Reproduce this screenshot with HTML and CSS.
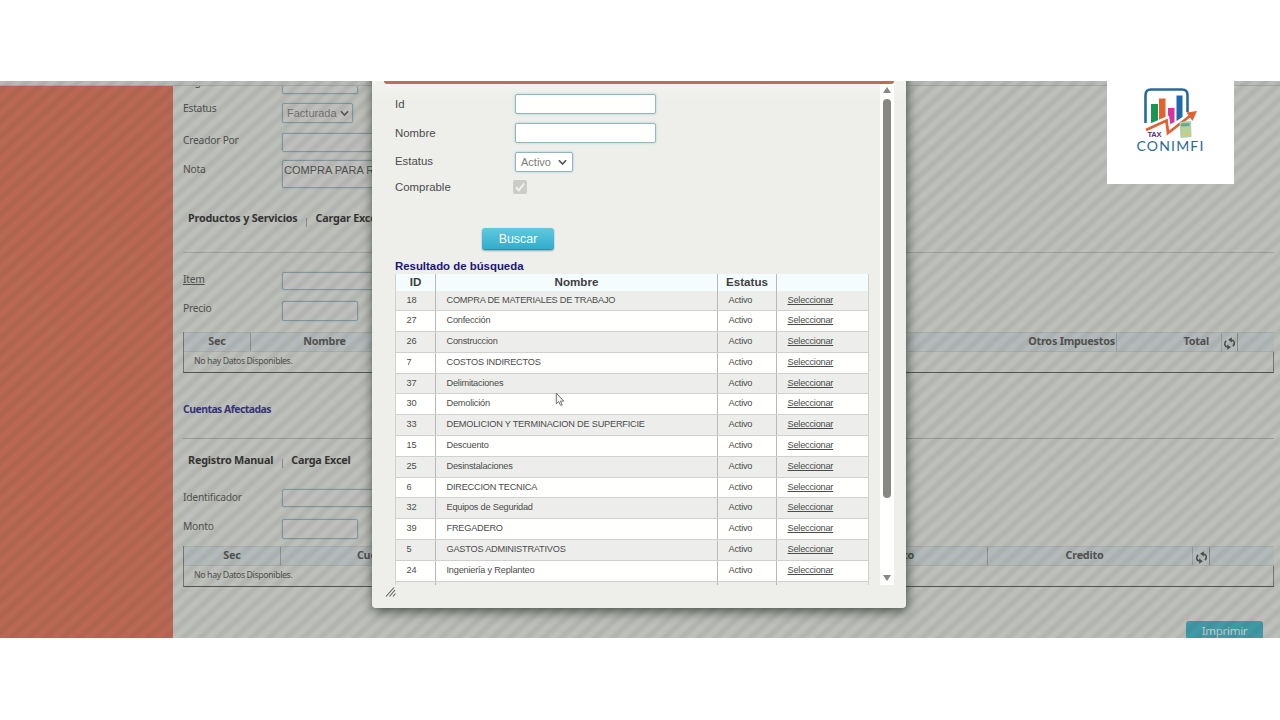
FILE: index.html
```html
<!DOCTYPE html>
<html lang="es">
<head>
<meta charset="utf-8">
<title>Conimfi</title>
<link rel="stylesheet" href="styles.css">
</head>
<body>
<main class="screen">
  <div class="topline"></div>
  <div class="app">
    <aside class="side"></aside>
    <section class="form">
      <div class="field f-cut"><span class="lbl">Registro</span><span class="box w76"></span></div>
      <div class="field f-status"><span class="lbl">Estatus</span><span class="box sel">Facturada<svg class="chev" viewBox="0 0 8 6"><path d="M.8 1 4 4.4 7.2 1"/></svg></span></div>
      <div class="field f-creator"><span class="lbl">Creador Por</span><span class="box wide"></span></div>
      <div class="field f-note"><span class="lbl">Nota</span><span class="box wide tall">COMPRA PARA R</span></div>
      <div class="tabs t1"><b>Productos y Servicios</b><i></i><b>Cargar Exce</b></div>
      <div class="field f-item"><span class="lbl"><u>Item</u></span><span class="box wide"></span></div>
      <div class="field f-price"><span class="lbl">Precio</span><span class="box w76"></span></div>
      <div class="grid">
        <div class="ghead g1"><span>Sec</span><span class="bl">Nombre</span><span class="end br">Otros Impuestos</span><span class="total">Total</span><span class="ico"><svg viewBox="0 0 14 14"><path d="M3.400 4.200C.8 6.500 1.300 10.200 5 10.800M10.600 9.800C13.200 7.500 12.700 3.800 9 3.200"/><path class="fl" d="M4.500 8 8.500 11 4.500 13.600ZM9.500.4 5.500 3 9.500 6Z"/></svg></span></div>
        <div class="gbody">No hay Datos Disponibles.</div>
      </div>
      <h2 class="accounts">Cuentas Afectadas</h2>
      <div class="tabs t2"><b>Registro Manual</b><i></i><b>Carga Excel</b></div>
      <div class="field f-ident"><span class="lbl">Identificador</span><span class="box wide"></span></div>
      <div class="field f-amount"><span class="lbl">Monto</span><span class="box w76"></span></div>
      <div class="grid">
        <div class="ghead g2"><span>Sec</span><span class="bl">Cuenta</span><span class="end deb">Debito</span><span class="bl cred">Credito</span><span class="ico"><svg viewBox="0 0 14 14"><path d="M3.400 4.200C.8 6.500 1.300 10.200 5 10.800M10.600 9.800C13.200 7.500 12.700 3.800 9 3.200"/><path class="fl" d="M4.500 8 8.500 11 4.500 13.600ZM9.500.4 5.500 3 9.500 6Z"/></svg></span></div>
        <div class="gbody">No hay Datos Disponibles.</div>
      </div>
      <div class="print"><span>Imprimir</span></div>
    </section>
  </div>
  <div class="veil"></div>

  <section class="dialog">
    <div class="bar"></div>
    <div class="pane">
      <div class="content">
        <div class="row"><label>Id</label><span class="inp"></span></div>
        <div class="row"><label>Nombre</label><span class="inp"></span></div>
        <div class="row r3"><label>Estatus</label><span class="inp pick">Activo<svg class="chev" viewBox="0 0 8 6"><path d="M.8 1 4 4.400 7.200 1"/></svg></span></div>
        <div class="row r4"><label>Comprable</label><span class="check"><svg viewBox="0 0 14 14"><path d="M3 7.500 5.800 10.300 11.200 3.500"/></svg></span></div>
        <div class="search">Buscar</div>
        <h3>Resultado de búsqueda</h3>
        <div class="results">
          <div class="tr th"><span>ID</span><span>Nombre</span><span>Estatus</span><span></span></div>
          <div class="tr"><span>18</span><span>COMPRA DE MATERIALES DE TRABAJO</span><span>Activo</span><span><u>Seleccionar</u></span></div>
          <div class="tr"><span>27</span><span>Confección</span><span>Activo</span><span><u>Seleccionar</u></span></div>
          <div class="tr"><span>26</span><span>Construccion</span><span>Activo</span><span><u>Seleccionar</u></span></div>
          <div class="tr"><span>7</span><span>COSTOS INDIRECTOS</span><span>Activo</span><span><u>Seleccionar</u></span></div>
          <div class="tr"><span>37</span><span>Delimitaciones</span><span>Activo</span><span><u>Seleccionar</u></span></div>
          <div class="tr"><span>30</span><span>Demolición</span><span>Activo</span><span><u>Seleccionar</u></span></div>
          <div class="tr"><span>33</span><span>DEMOLICION Y TERMINACION DE SUPERFICIE</span><span>Activo</span><span><u>Seleccionar</u></span></div>
          <div class="tr"><span>15</span><span>Descuento</span><span>Activo</span><span><u>Seleccionar</u></span></div>
          <div class="tr"><span>25</span><span>Desinstalaciones</span><span>Activo</span><span><u>Seleccionar</u></span></div>
          <div class="tr"><span>6</span><span>DIRECCION TECNICA</span><span>Activo</span><span><u>Seleccionar</u></span></div>
          <div class="tr"><span>32</span><span>Equipos de Seguridad</span><span>Activo</span><span><u>Seleccionar</u></span></div>
          <div class="tr"><span>39</span><span>FREGADERO</span><span>Activo</span><span><u>Seleccionar</u></span></div>
          <div class="tr"><span>5</span><span>GASTOS ADMINISTRATIVOS</span><span>Activo</span><span><u>Seleccionar</u></span></div>
          <div class="tr"><span>24</span><span>Ingeniería y Replanteo</span><span>Activo</span><span><u>Seleccionar</u></span></div>
          <div class="tr last"><span></span><span></span><span></span><span></span></div>
        </div>
      </div>
      <div class="scroll"><i class="up"></i><i class="thumb"></i><i class="down"></i></div>
    </div>
    <svg class="grip" viewBox="0 0 12 12"><path d="M1 10.500 9 1.500M4.500 10.500 10 4M8 10.500 10.500 7.500"/></svg>
  </section>

  <div class="brand">
    <svg class="mark" viewBox="0 0 54 54">
      <path d="M4.500 38V10Q4.500 4.500 10 4.500H41Q46.500 4.500 46.500 10V27" fill="none" stroke="#27699f" stroke-width="2.600"/>
      <path d="M10 19H17V36L10 39Z" fill="#189455"/>
      <path d="M18 13.500H24.500V32L18 35Z" fill="#e5602f"/>
      <path d="M27 23H33.500V37L28 40 27 33Z" fill="#d4359c"/>
      <path d="M35.500 10.500H41.500V32L35.500 36Z" fill="#1c69ae"/>
      <path d="M5 43 26 34 28 46 49 30" fill="none" stroke="#fff" stroke-width="5"/>
      <path d="M5 45 25.500 35.500 27 48 49 31" fill="none" stroke="#df6234" stroke-width="2.800"/>
      <path d="M45.500 27.500 56 26 51.500 36Z" fill="#df6234"/>
      <path d="M38.500 37 50 36 50.500 52 39.500 53Z" fill="#a9d3ae"/>
      <path d="M40 38.500 48.500 38V41L40 41.500Z" fill="#6fa491"/>
      <path d="M41.500 44H49M41.500 47H49M41.500 50H49" stroke="#dccb69" stroke-width="1.800" stroke-dasharray="1.800 .9"/>
      <text class="tax" x="6.500" y="51.500" textLength="14">TAX</text>
    </svg>
    <div class="name">CONIMFI</div>
  </div>

  <svg class="cursor" viewBox="0 0 9 14"><path d="M1 1V11L3.300 9 5 12.500 6.500 12 5 8.500H8Z"/></svg>
</main>
</body>
</html>
```
FILE: styles.css
```css
* { box-sizing: border-box; }
body { margin: 0; height: 720px; overflow: hidden; background: #fff; padding-top: 81px; font-family: "Liberation Sans", Arial, sans-serif; }
.screen { position: relative; height: 557px; overflow: hidden; background: #bdbfba; }
.topline { height: 5px; border-bottom: 1px solid #a4a6a1; background: #b9bbb8; }
.app { display: flex; height: 552px; }
.side { width: 173px; background: #b96853; }
.form { flex: 1; padding: 0 6px 0 10px; overflow: hidden; font-family: "Noto Sans", sans-serif; color: #50514f; }
.veil { position: absolute; inset: 0; background: repeating-linear-gradient(138deg, rgba(50,48,45,0) 0 3px, rgba(50,48,45,.075) 6px 8.500px, rgba(50,48,45,0) 11.500px); }

.field { display: flex; align-items: flex-start; font-size: 10.300px; letter-spacing: -.25px; line-height: 14px; }
.lbl { width: 99px; flex: none; }
.box { height: 20px; border: 1px solid #84969c; box-shadow: 0 0 2px #8fa3ab; border-radius: 2px; background: #bebfbc; letter-spacing: 0; }
.w76 { width: 76px; }
.wide { width: 200px; }
.sel { width: 71px; display: flex; align-items: center; gap: 3px; padding-left: 4px; margin-top: 2px; font: 11px "Liberation Sans", sans-serif; color: #70716f; }
.tall { height: 28px; font: 11px/18px "Liberation Sans", sans-serif; padding-left: 1px; }
.chev { width: 9px; height: 7px; fill: none; stroke: #555; stroke-width: 1.500; flex: none; }
.f-cut { height: 15px; }
.f-cut .lbl { margin-top: -12px; }
.f-cut .box { height: 8px; border-top: 0; }
.f-status { height: 32px; }
.f-creator { height: 28px; }
.f-creator .box { height: 19px; }
.f-note { height: 49px; }
.f-note .lbl { margin-top: 1px; }
.f-note .box { margin-top: -1px; }
.tabs { display: flex; font-size: 10.800px; letter-spacing: -.2px; line-height: 18px; color: #333432; padding-left: 5px; }
.tabs i { width: 1px; height: 9px; margin: 8px 8.500px 0; background: #8b8a80; }
.t1 { height: 43px; margin-bottom: 19px; border-bottom: 1px solid #a0a29d; line-height: 16px; }
.t2 { height: 50px; padding-top: 12px; }
.f-item { height: 29px; }
.f-item .box, .f-ident .box { height: 18px; }
.f-price { height: 31px; }
.f-ident { height: 30px; }
.f-ident .lbl { margin-top: 1px; }
.f-amount { height: 27px; }
.grid { height: 41px; border-left: 1px solid #747672; border-bottom: 1px solid #545652; font-size: 8.800px; letter-spacing: -.4px; line-height: 18px; }
.ghead { display: grid; height: 20px; font-size: 10.800px; letter-spacing: -.22px; font-weight: bold; line-height: 16px; text-align: center; background: #b4babb; border-top: 1px solid #aaadaa; border-bottom: 1px solid #aaadaa; }
.ghead span { height: 18px; }
.bl { border-left: 1px solid #8d918f; }
.br { border-right: 1px solid #9a9ea0; }
.end { text-align: right; padding-right: 1px; }
.g1 { grid-template-columns: 66px 148px 719px 104px 17px; }
.g2 { grid-template-columns: 96px 190px 517px 206px 17px; }
.g1 .total { text-align: right; padding-right: 12px; }
.g2 .deb { padding-right: 73px; }
.g2 .cred { padding-right: 12px; }
.ico { border-left: 1px solid #9a9ea0; border-right: 1px solid #858985; }
.ico svg { width: 13px; height: 13px; display: block; margin: 4px auto 0; fill: none; stroke: #4c4d4b; stroke-width: 1.700; }
.ico .fl { fill: #4c4d4b; stroke: none; }
.g2 .ico { margin-left: -1px; }
.gbody { height: 20px; padding-left: 10px; border-right: 1px solid #777974; }
.accounts { margin: 0; height: 66px; padding-top: 26px; border-bottom: 1px solid #989a95; font-size: 10.400px; letter-spacing: -.5px; line-height: 20px; color: #36347b; }

.dialog { position: absolute; left: 372px; top: -20px; width: 533.500px; height: 547px; padding: 20px 11.500px 0 11px; background: linear-gradient(#f3f3ef 20px, #eeefeb 40px); border-radius: 4px; box-shadow: 1px 3px 12px rgba(30,38,30,.75); }
.bar { height: 3px; margin-left: 1px; background: #bf6d55; border-radius: 0 0 3px 3px; }
.pane { display: flex; height: 501px; }
.content { flex: 1; padding: 10px 11px 0 12px; overflow: hidden; color: #4b4c4a; }
.row { display: flex; height: 29px; font-size: 11.400px; line-height: 20px; }
.row label { width: 120px; }
.inp { width: 141px; height: 20px; background: #fffffe; border: 1px solid #91b7bd; border-radius: 2px; box-shadow: 0 0 3px #a9cfd6; }
.pick { width: 58px; display: flex; align-items: center; gap: 7px; padding-left: 5px; font-size: 11px; color: #7c7d7a; }
.r3 { height: 27px; }
.r3 label { line-height: 18px; }
.check { width: 14px; height: 14px; margin: 1px 0 0 -2px; background: #cbccc8; border-radius: 2px; }
.check svg { width: 14px; height: 14px; display: block; fill: none; stroke: #f2f2ee; stroke-width: 2; }
.r4 { height: 49px; line-height: 16px; }
.search { width: 72px; height: 22px; margin-left: 87px; border-radius: 3px; background: linear-gradient(#61c9de, #31adcb); border-bottom: 1px solid #338ea3; box-shadow: 0 1px 2px rgba(0,60,80,.4); color: #f4ffff; font-size: 12.400px; line-height: 22px; text-align: center; }
h3 { margin: 0; height: 24px; padding-top: 10px; color: #1b1573; font-size: 11.400px; line-height: 13px; }
.results { border-right: 1px solid #cdd0d0; width: 473.500px; }
.tr { display: grid; grid-template-columns: 40px 282px 59px 1fr; height: 20.800px; line-height: 19px; font-size: 9.200px; letter-spacing: -.21px; background: #fffffe; border-bottom: 1px solid #cfd1ce; }
.tr span { border-left: 1px solid #b7bab8; padding-left: 10.500px; white-space: nowrap; }
.tr span:first-child { border-color: #d0d2d0; }
.tr:nth-child(even) { background: #edeeeb; line-height: 18px; }
.tr.th { height: 16.500px; line-height: 16px; background: #f5fcfd; font-size: 11.600px; letter-spacing: 0; font-weight: bold; border: 0; color: #3d3f40; }
.tr.th span { padding: 0; text-align: center; }
.scroll { width: 14px; background: #fffffe; display: flex; flex-direction: column; align-items: center; }
.up, .down { border: 4px solid transparent; }
.up { border-bottom: 6px solid #868883; border-top: 0; margin-top: 3px; }
.thumb { width: 8px; height: 399px; margin-top: 6px; border-radius: 4px; background: #868883; }
.down { border-top: 6px solid #868883; border-bottom: 0; margin-top: auto; margin-bottom: 4px; }
.grip { display: block; width: 12px; height: 12px; margin: 1px 0 0 2px; fill: none; stroke: #5c5d5a; stroke-width: 1.100; }

.brand { position: absolute; left: 1107px; top: 0; width: 127px; height: 103px; padding-top: 4px; background: #fff; text-align: center; }
.mark { display: block; width: 54px; height: 54px; margin-left: 34px; overflow: visible; }
.tax { font: bold 7.500px "Liberation Sans", sans-serif; fill: #622d78; }
.name { font: 14px/16px Lato, sans-serif; letter-spacing: 1.200px; color: #2c6a93; margin-top: -1px; }
.cursor { position: absolute; left: 555px; top: 311px; width: 10px; height: 15px; fill: #f5f5f2; stroke: #6d6e6b; stroke-width: .9; }
.print { display: flex; justify-content: flex-end; padding: 34px 11px 0 0; }
.print span { width: 77px; height: 24px; border-radius: 3px; background: #409aa5; color: #c3d3d2; font-size: 11.500px; letter-spacing: -.3px; line-height: 19px; text-align: center; }
```
